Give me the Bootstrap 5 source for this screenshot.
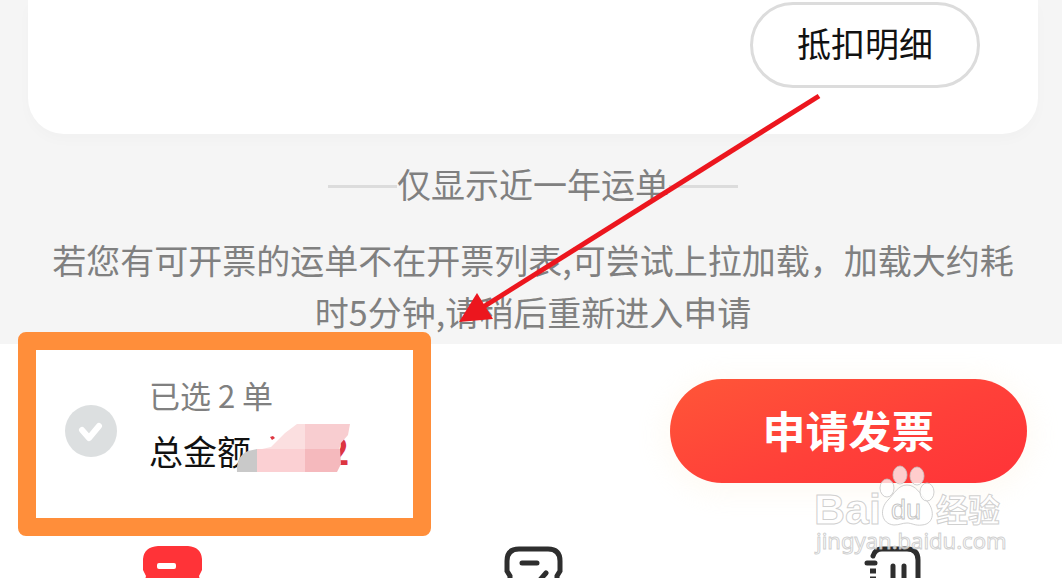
<!DOCTYPE html>
<html lang="zh-CN">
<head>
<meta charset="utf-8">
<meta name="viewport" content="width=device-width, initial-scale=1">
<title>申请发票</title>
<link href="https://cdn.jsdelivr.net/npm/bootstrap@5.3.0/dist/css/bootstrap.min.css" rel="stylesheet">
<style>
  body { font-family: "Noto Sans CJK SC", sans-serif; font-size: 34px; line-height: 52px; color: #111; background: #fff; overflow: hidden; }
  .orders { background: #f5f5f5; padding: 0 24px 6px 28px; }
  .order-card { border-radius: 0 0 36px 36px; padding: 2px 58px 46px; box-shadow: 0 6px 14px rgba(0,0,0,.02); }
  .btn-detail { width: 230px; height: 86px; border: 3px solid #dcdcdc; font-size: 34px; color: #111; line-height: 48px; padding: 0 0 4px; }
  .hint { color: #808080; }
  .rule { width: 69px; height: 3px; background: #dcdcdc; }
  .checkout { padding: 23px 35px 51px 65px; }
  .form-check-input.pick { width: 52px; height: 52px; margin: 0; border: 0; background-color: #dcdfe0; background-size: 52px 52px;
    background-image: url("data:image/svg+xml,%3csvg xmlns='http://www.w3.org/2000/svg' viewBox='0 0 52 52'%3e%3cpath fill='none' stroke='white' stroke-width='6' stroke-linecap='round' stroke-linejoin='round' d='M17 25l7 8 10-12'/%3e%3c/svg%3e"); }
  .picked { font-size: 31px; line-height: 56px; color: #808080; }
  .total { line-height: 56px; }
  .amount { color: #dd3540; font-size: 38px; line-height: 38px; font-weight: 700; margin-left: 76px; }
  .mosaic { position: absolute; left: 110px; top: 55px; }
  .btn-apply { width: 357px; height: 104px; border: 0; color: #fff; font-size: 43px; line-height: 64px; font-weight: 700; padding: 0 0 4px; background: linear-gradient(160deg, #ff5638, #ff4039 55%, #ff3338); box-shadow: 0 4px 24px 8px rgba(250,240,215,.24); }
  .btn-apply:hover { color: #fff; }
  .tabs { padding: 0 138px 0 142px; height: 32px; }
  .highlight { position: absolute; left: 18px; top: -12px; width: 413px; height: 204px; border: 18px solid #ff8e3a; border-radius: 8px; pointer-events: none; }
  .arrow { position: absolute; left: 450px; top: 86px; pointer-events: none; }
  .watermark { position: absolute; right: 52px; top: 118px; pointer-events: none; }
</style>
</head>
<body>
<div class="position-relative">
  <main class="orders">
    <section class="order-card bg-white d-flex justify-content-end">
      <button type="button" class="btn btn-detail rounded-pill bg-white">抵扣明细</button>
    </section>
    <div class="hint d-flex justify-content-center align-items-center mt-4">
      <span class="rule mt-1"></span><span>仅显示近一年运单</span><span class="rule mt-1"></span>
    </div>
    <p class="hint text-center mt-4 mb-0">若您有可开票的运单不在开票列表,可尝试上拉加载，加载大约耗<br>时5分钟,请稍后重新进入申请</p>
  </main>

  <footer class="position-relative">
    <div class="checkout d-flex align-items-center justify-content-between">
      <div class="d-flex align-items-center">
        <input class="form-check-input pick rounded-circle" type="checkbox" id="pick" checked>
        <label for="pick" class="position-relative ms-2 ps-4 pb-3">
          <span class="picked d-block">已选 2 单</span>
          <span class="total d-flex align-items-baseline">总金额<span class="amount">2</span></span>
          <svg class="mosaic" width="120" height="60" viewBox="235 422 120 60" aria-hidden="true">
            <path fill="#fbdfe0" d="M262 449l9-2 14-14 12-9h8v26h-43z"/>
            <path fill="#f8cdd0" d="M305 424h45l-2 11-7 8-2 7h-34z"/>
            <path fill="#c9c9c9" d="M257 449v23h-20q-1-16 11-21z"/>
            <path fill="#fbd0d3" d="M257 449h48v23h-48z"/>
            <path fill="#f5b9bd" d="M305 449h35l1 15-4 8h-32z"/>
            <path fill="#dd3540" d="M270 437l3-1 2 2-3 2z"/>
          </svg>
        </label>
      </div>
      <button type="button" class="btn btn-apply rounded-pill">申请发票</button>
    </div>
    <div class="highlight"></div>
    <nav class="tabs d-flex justify-content-between overflow-hidden" aria-label="主导航">
      <a href="#send" aria-label="运单" class="d-flex"><svg width="62" height="32" viewBox="142 546 62 32"><path fill="#ff3338" d="M158 546h30q13 1 14 13v11l-3 6 1 4h-55l1-4-3-6v-11q1-12 15-13z"/><rect x="157" y="563" width="19" height="6" rx="2" fill="#fff"/></svg></a>
      <a href="#invoice" aria-label="开票" class="d-flex"><svg width="62" height="32" viewBox="501 546 62 32" fill="none" stroke="#2e2e2e" stroke-width="5" stroke-linecap="round"><path d="M509 584v-8l-3-5v-10q0-12 12-12h29q12 0 12 12v10l-3 5v8M521 563h15M545 573l-7 8"/></svg></a>
      <a href="#history" aria-label="记录" class="d-flex"><svg width="62" height="32" viewBox="862 546 62 32" fill="none" stroke="#2e2e2e" stroke-width="5" stroke-linecap="round"><path d="M873 556q2-7 9-7h25q11 0 11 11v25M867 563h8M893 566v16M904 566v16"/><path stroke-linecap="butt" d="M870 571h6M870 579h6"/></svg></a>
    </nav>
    <svg class="watermark" width="198" height="116" viewBox="812 462 198 116" role="img" aria-label="Baidu 经验">
      <g fill="#fff" fill-opacity=".75" stroke="#c4c4c4" stroke-opacity=".8" stroke-width="1">
        <text x="814" y="524" font-family="Liberation Sans" font-weight="700" font-size="43">Bai</text>
        <path d="M907 485c-9 0-13 9-19 15-9 9-7 24 6 25 6 0 8-2 13-2s8 3 15 2c13-1 13-16 4-25-6-6-10-15-19-15z"/>
        <ellipse cx="887" cy="488" rx="7" ry="9"/><ellipse cx="900" cy="475" rx="7" ry="9"/><ellipse cx="917" cy="476" rx="7" ry="9"/><ellipse cx="927" cy="492" rx="7" ry="9"/>
        <text x="891" y="519" font-family="Liberation Sans" font-size="27" stroke="#b4b4b4">du</text>
        <text x="936" y="522" font-family="Noto Sans CJK SC" font-weight="700" font-size="32">经验</text>
        <text x="816" y="549" font-family="Noto Sans" font-size="22">jingyan.baidu.com</text>
      </g>
    </svg>
  </footer>
  <svg class="arrow" width="380" height="246" viewBox="450 86 380 246" aria-hidden="true">
    <path d="M819 96L480 309" stroke="#ec161e" stroke-width="5" fill="none"/>
    <path d="M459 322l18-29 16 26z" fill="#ec161e"/>
  </svg>
</div>
<script src="https://cdn.jsdelivr.net/npm/bootstrap@5.3.0/dist/js/bootstrap.bundle.min.js"></script>
</body>
</html>
